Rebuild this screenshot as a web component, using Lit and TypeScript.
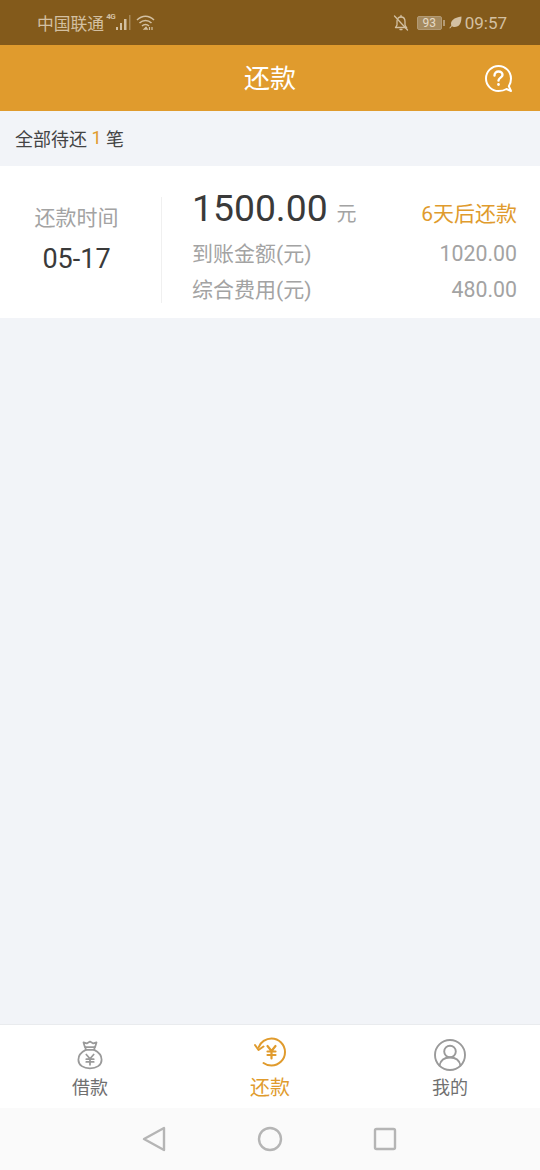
import { LitElement, css, html, svg } from 'lit';
import { customElement } from 'lit/decorators.js';

const bagIcon = svg`
  <g fill="none" stroke="#9a9a9a" stroke-width="1.9" stroke-linejoin="round" stroke-linecap="round">
    <path d="M7 2.5 L10.5 3.5 L14 1.5 L17.5 3.5 L21 2.5 L19.5 7.5 H8.5 Z" />
    <path d="M9 7.5 L9.5 10.5 H18.5 L19 7.5" />
    <path d="M9.5 10.5 C4.5 13 1.5 17 1.5 21 C1.5 27 7 30.5 14 30.5 C21 30.5 26.5 27 26.5 21 C26.5 17 23.5 13 18.5 10.5" />
    <path d="M10 15.5 L14 20 L18 15.5 M14 20 V26.5 M10 20.5 H18 M10 23.5 H18" />
  </g>`;

const repayIcon = svg`
  <g fill="none" stroke="#e09b2d" stroke-width="2" stroke-linecap="round" stroke-linejoin="round">
    <path d="M4.5 11 C6.5 5.5 12 2 17.5 2 C25 2 31 8 31 15.5 C31 23 25 29 17.5 29 C14.5 29 11.5 28 9.5 26.5" />
    <path d="M1 8.5 L4.5 13.5 L9.5 10" />
    <path d="M13.5 9.5 L17.5 14.5 L21.5 9.5 M17.5 14.5 V22 M13.5 15 H21.5 M13.5 18.5 H21.5" stroke-width="2.2" />
  </g>`;

const userIcon = svg`
  <g fill="none" stroke="#9a9a9a" stroke-width="1.9" stroke-linecap="round">
    <circle cx="16" cy="16" r="15" />
    <circle cx="16" cy="12.5" r="5.8" />
    <path d="M5.5 26.5 C6.5 21.5 10.5 18.5 16 18.5 C21.5 18.5 25.5 21.5 26.5 26.5" />
  </g>`;

@customElement('app-root')
export class AppRoot extends LitElement {
  static styles = css`
    :host {
      display: flex;
      flex-direction: column;
      height: 1170px;
      background: #f2f4f8;
      font-family: Roboto, 'Noto Sans CJK SC', sans-serif;
      color: #3a3a3a;
    }

    .status {
      height: 45px;
      background: #835a1b;
      color: #d3c0a2;
      display: flex;
      align-items: center;
      justify-content: space-between;
      padding: 0 33px 0 37px;
      font-size: 16.8px;
    }

    .status-side {
      display: flex;
      align-items: center;
    }

    .carrier {
      margin-right: 2px;
    }

    .tiny {
      font-size: 8px;
      font-weight: 700;
      width: 9px;
      line-height: 8px;
      align-self: flex-start;
      margin-top: 2px;
      letter-spacing: -0.4px;
    }

    .time {
      font-size: 17px;
      margin-left: 3px;
    }

    .battery {
      width: 25px;
      height: 14px;
      box-sizing: border-box;
      border: 1px solid #b39a74;
      border-radius: 2px;
      background: #a58a5f;
      color: #e6dac6;
      font-size: 12px;
      line-height: 12px;
      text-align: center;
      margin-left: 8px;
    }

    .battery-tip {
      width: 2px;
      height: 6px;
      background: #b39a74;
      margin: 0 4px 0 1px;
    }

    .header {
      height: 66px;
      padding-bottom: 3px;
      box-sizing: border-box;
      background: #e09b2d;
      color: #fff;
      position: relative;
      display: flex;
      align-items: center;
      justify-content: center;
      font-size: 26px;
    }

    .help {
      position: absolute;
      right: 28px;
      top: 20px;
      width: 27px;
      height: 27px;
    }

    .summary {
      height: 55px;
      padding: 0 0 2px 15px;
      box-sizing: border-box;
      display: flex;
      align-items: center;
      font-size: 18px;
      white-space: pre;
      color: #444;
    }

    .summary b {
      font-weight: 400;
      color: #e09b2d;
    }

    .card {
      height: 152px;
      background: #fff;
      display: flex;
      align-items: flex-start;
    }

    .date {
      width: 153px;
      margin-top: 38px;
      text-align: center;
      color: #a3a3a3;
      font-size: 21px;
      line-height: 28px;
      flex: none;
    }

    .date div {
      color: #3a3a3a;
      font-size: 27px;
      line-height: 32px;
      margin-top: 11px;
    }

    .divider {
      width: 1px;
      height: 106px;
      margin: 31px 0 0 8px;
      background: #f0f0f0;
      flex: none;
    }

    .detail {
      flex: 1;
      padding: 20px 23px 0 30px;
    }

    .row {
      display: flex;
      justify-content: space-between;
      align-items: center;
      height: 36px;
      color: #a3a3a3;
      font-size: 21px;
    }

    .row.top {
      height: 48px;
      align-items: baseline;
    }

    .amount {
      display: flex;
      align-items: baseline;
      gap: 9px;
      font-size: 20px;
    }

    .amount strong {
      font-weight: 400;
      font-size: 37.3px;
      color: #3a3a3a;
    }

    .due {
      color: #e09b2d;
      font-size: 21px;
    }

    .value {
      font-size: 21.3px;
      padding-top: 2px;
    }

    .spacer {
      flex: 1;
    }

    .tabs {
      height: 83px;
      background: #fff;
      border-top: 1px solid #e9ebee;
      display: flex;
    }

    .tab {
      flex: 1;
      display: flex;
      flex-direction: column;
      align-items: center;
      color: #707070;
      font-size: 18px;
      line-height: 26px;
    }

    .tab svg {
      width: 32px;
      height: 32px;
      margin-top: 14px;
      margin-bottom: 4px;
    }

    .tab svg.bag {
      width: 26px;
      height: 30px;
      margin-top: 15px;
      margin-bottom: 5px;
    }

    .tab.active {
      color: #e09b2d;
      font-size: 20px;
    }

    .tab.active svg {
      margin-top: 11px;
      margin-bottom: 7px;
    }

    .nav {
      height: 62px;
      background: #fafafa;
      display: flex;
      justify-content: center;
      align-items: center;
      gap: 89px;
    }

    .nav svg {
      width: 26px;
      height: 26px;
    }
  `;

  render() {
    return html`
      <div class="status">
        <div class="status-side">
          <span class="carrier">中国联通</span>
          <span class="tiny">4G</span>
          <svg width="17" height="16" viewBox="0 0 17 16" fill="#d3c0a2">
            <rect x="1" y="12" width="2" height="3" />
            <rect x="5" y="8" width="2" height="7" />
            <rect x="9" y="4" width="2.5" height="11" />
            <rect x="14" y="0" width="1.5" height="15" opacity="0.45" />
          </svg>
          <svg width="20" height="18" viewBox="0 0 20 18" fill="none" stroke="#d3c0a2" stroke-width="1.5" style="margin-left:4px">
            <path d="M1 6 C6 1 13 1 18 6" />
            <path d="M3.5 9 C7 5.5 12 5.5 15.5 9" />
            <path d="M6 12 C8 10 11 10 13 12" />
            <path d="M8.5 15 L10 13.5 L11 15 Z" fill="#d3c0a2" />
            <path d="M13.5 13 V16 M16 13 V16" stroke-width="1.2" />
          </svg>
        </div>
        <div class="status-side">
          <svg width="16" height="18" viewBox="0 0 16 18" fill="none" stroke="#d3c0a2" stroke-width="1.3" stroke-linecap="round">
            <path d="M2.5 13.5 H13.5 L12 11 V7.5 C12 5 10.5 3 8 3 C6.8 3 5.8 3.4 5 4.2 M4.2 6 C4 6.5 4 7 4 7.5 V11 L2.5 13.5" />
            <path d="M7 15.5 H9 M8 1.5 V3 M1.5 2 L14.5 16" />
          </svg>
          <span class="battery">93</span>
          <span class="battery-tip"></span>
          <svg width="13" height="13" viewBox="0 0 13 13" fill="#d3c0a2">
            <path d="M12.5 0.5 C12.5 7 10.5 11 5.5 11 C4.5 11 3.5 10.7 3 10.2 L1 12.5 L0.3 12 L2.3 9.4 C0.8 5 5 1.5 12.5 0.5 Z" />
          </svg>
          <span class="time">09:57</span>
        </div>
      </div>

      <div class="header">
        还款
        <svg class="help" viewBox="0 0 27 27" fill="none" stroke="#fff" stroke-width="2" stroke-linecap="round">
          <path d="M26 26 L21.5 24 C19.5 25.3 16.5 26 13.5 26 C6.6 26 1 20.4 1 13.5 C1 6.6 6.6 1 13.5 1 C20.4 1 26 6.6 26 13.5 C26 16.5 25.2 19.2 23.8 21.2 Z" stroke-linejoin="round" />
          <path d="M9.5 10.5 C9.5 8 11.3 6.5 13.5 6.5 C15.8 6.5 17.5 8 17.5 10 C17.5 12.5 13.5 12.8 13.5 15.5" stroke-width="2.4" />
          <circle cx="13.5" cy="19.5" r="0.6" stroke-width="1.6" fill="#fff" />
        </svg>
      </div>

      <div class="summary">全部待还 <b>1</b> 笔</div>

      <div class="card">
        <div class="date">
          还款时间
          <div>05-17</div>
        </div>
        <div class="divider"></div>
        <div class="detail">
          <div class="row top">
            <span class="amount"><strong>1500.00</strong>元</span>
            <span class="due">6天后还款</span>
          </div>
          <div class="row"><span>到账金额(元)</span><span class="value">1020.00</span></div>
          <div class="row"><span>综合费用(元)</span><span class="value">480.00</span></div>
        </div>
      </div>

      <div class="spacer"></div>

      <div class="tabs">
        <div class="tab"><svg class="bag" viewBox="0 0 28 32">${bagIcon}</svg>借款</div>
        <div class="tab active"><svg viewBox="0 0 32 31">${repayIcon}</svg>还款</div>
        <div class="tab"><svg viewBox="0 0 32 32">${userIcon}</svg>我的</div>
      </div>

      <div class="nav">
        <svg viewBox="0 0 26 26" fill="none" stroke="#b5b5b5" stroke-width="2.4" stroke-linejoin="round">
          <path d="M22 2 V24 L2 13 Z" />
        </svg>
        <svg viewBox="0 0 26 26" fill="none" stroke="#b5b5b5" stroke-width="2.4">
          <circle cx="13" cy="13" r="11" />
        </svg>
        <svg viewBox="0 0 26 26" fill="none" stroke="#b5b5b5" stroke-width="2.4" stroke-linejoin="round">
          <rect x="3" y="3" width="20" height="20" rx="1.5" />
        </svg>
      </div>
    `;
  }
}
